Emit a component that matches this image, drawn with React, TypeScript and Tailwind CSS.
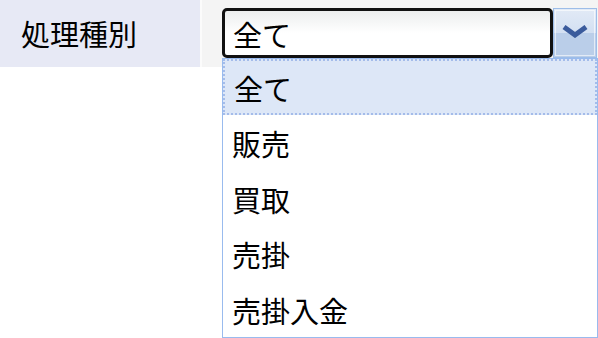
import React from 'react';

const options = ['全て', '販売', '買取', '売掛', '売掛入金'];

export default function App() {
  const font = { fontFamily: '"Noto Sans CJK JP", "Noto Sans", sans-serif' };
  return (
    <div className="w-[598px] h-[338px] bg-white overflow-hidden text-black" style={font}>
      <div className="flex h-[67px]">
        {/* label cell */}
        <div className="w-[200px] bg-[#e7e9f5] flex items-center pl-[21px] text-[29px] leading-none">
          処理種別
        </div>
        <div className="w-[2px] bg-[#fbfbfb]" />
        {/* value cell */}
        <div className="flex-1 bg-[#f4f4f4] pt-[8px] pl-[20px] relative">
          <div className="flex h-[50px]">
            <div className="w-[331px] h-[50px] border-[3px] border-[#111] rounded-[5px] bg-gradient-to-b from-[#eceeee] via-white to-white flex items-center pl-[8px] pt-[2px] text-[29px] leading-none">
              全て
            </div>
            <div className="w-[44px] h-[50px] border border-[#9dbde8] bg-gradient-to-b from-[#e2eaf6] from-0% via-[#d3e0f2] via-50% to-[#bacee9] to-50% flex items-center justify-center relative">
              <div className="absolute inset-[1px] border border-white/60" />
              <svg width="26" height="13" viewBox="0 0 26 13" className="relative -mt-[3px]">
                <path d="M2 2 L13 10 L24 2" fill="none" stroke="#3a5b9c" strokeWidth="5" strokeLinejoin="miter" />
              </svg>
            </div>
          </div>
          {/* dropdown list */}
          <div className="absolute left-[20px] top-[58px] w-[376px] h-[280px] border border-[#99bbee] bg-white z-10 pb-[1px]">
            {options.map((o, i) => (
              <div
                key={o}
                className={`h-[55.5px] flex items-center pl-[9px] pt-[3px] text-[29px] leading-none ${
                  i === 0 ? 'bg-[#dde7f7] border-2 border-dotted border-[#a4bcea] pl-[7px]' : ''
                }`}
              >
                {o}
              </div>
            ))}
          </div>
        </div>
      </div>
    </div>
  );
}
